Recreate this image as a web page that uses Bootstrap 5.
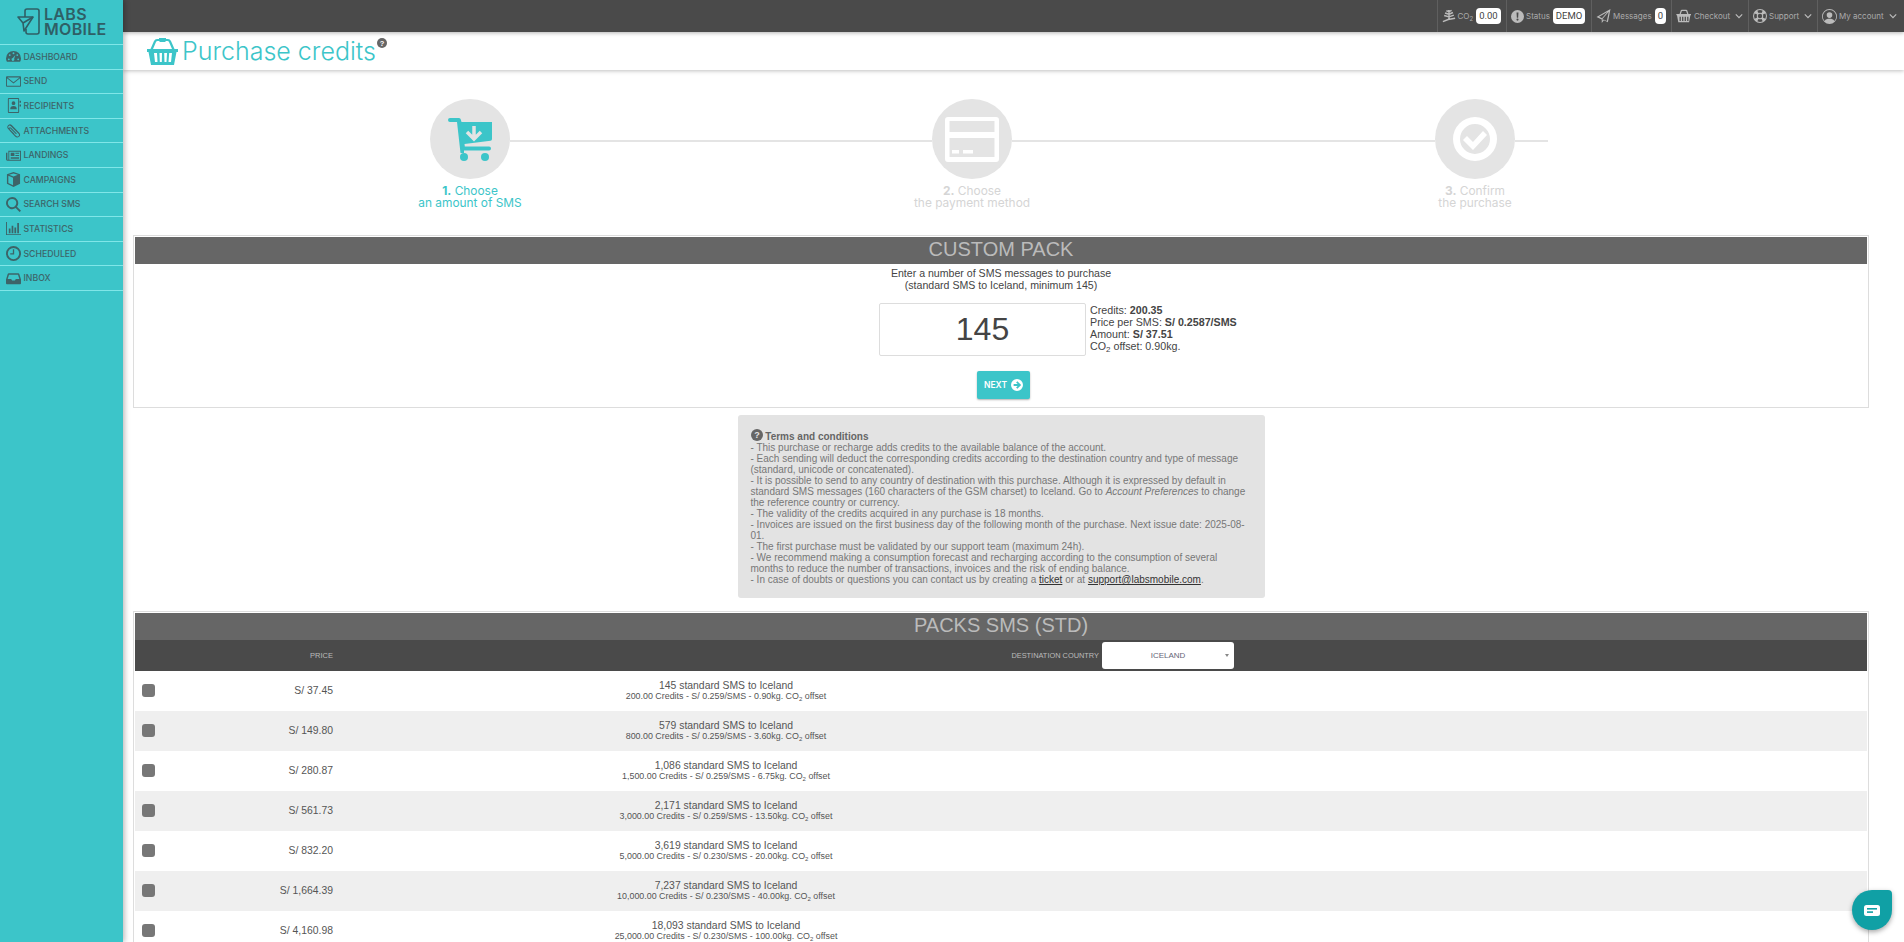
<!DOCTYPE html>
<html lang="en">
<head>
    <meta charset="UTF-8">
    <meta name="viewport" content="width=device-width, initial-scale=1.0">
    <title>Purchase credits</title>
    <link href="https://cdn.jsdelivr.net/npm/bootstrap@5.3.0/dist/css/bootstrap.min.css" rel="stylesheet">
    <style>
        html, body { height: 100%; overflow: hidden; }
        body { font-family: "Liberation Sans", Arial, sans-serif; color: #444; background: #fff; }
        .side-bar { width: 123px; background: #3cc5c9; box-shadow: 2px 0 5px rgba(0,0,0,.25); z-index: 3; }
        .logo-box { height: 44px; padding-left: 17px; gap: 3px; color: #2f5f66; }
        .logo-words { font: 600 16px/15px Inter, sans-serif; letter-spacing: .3px; }
        .side-link { height: 24.6px; border-top: 1px solid #80e6e8; font: 500 8.7px Inter, sans-serif; color: #3d6468; text-transform: uppercase; text-decoration: none; }
        .side-link:last-child { border-bottom: 1px solid #80e6e8; height: 25.6px; }
        .side-ico { width: 23.5px; flex: none; display: flex; justify-content: center; padding-left: 4px; }
        .side-ico svg { width: 15px; height: 15px; fill: #3d6468; }
        .top-strip { height: 32px; background: #4a4a4a; color: #aaa; font: 400 8px Inter, sans-serif; box-shadow: 0 1px 4px rgba(0,0,0,.3); z-index: 2; }
        .top-item { height: 32px; border-left: 1px solid #5f5f5f; padding-left: 4px; gap: 2px; }
        .top-item:nth-child(1) { width: 69.5px; }
        .top-item:nth-child(2) { width: 85px; }
        .top-item:nth-child(3) { width: 80px; }
        .top-item:nth-child(4) { width: 77px; }
        .top-item:nth-child(5) { width: 69px; }
        .top-item:nth-child(6) { width: 87px; }
        .top-item svg { fill: #bbb; flex: none; }
        .top-pill { background: #fff; color: #444; border-radius: 4px; height: 16px; padding: 0 3px; font: 9.5px/16px Roboto, sans-serif; margin-left: 1px; }
        .chev { width: 8px; height: 8px; margin-left: 3px; }
        .title-strip { height: 38px; padding-left: 24px; color: #3cc5c9; box-shadow: 0 1px 4px rgba(0,0,0,.25); font: 300 25px/38px Inter, sans-serif; z-index: 1; }
        .title-help { width: 10px; height: 10px; margin: -16px 0 0 1px; }
        .page-body { padding: 0 35px 0 10px; }
        .step-row { padding: 29px 0 0 297px; height: 165px; }
        .step-item { width: 80px; font: 400 11.9px/12px Inter, sans-serif; white-space: nowrap; color: #d5d5d5; }
        .step-item.on { color: #3cc5c9; }
        .step-dot { width: 80px; height: 80px; background: #e4e4e4; margin-bottom: 6px; }
        .step-line { height: 2px; background: #e4e4e4; margin-top: 41px; }
        .pack-panel { border: 1px solid #ddd; padding: 1px; }
        .pack-title { height: 27px; background: #666; color: #bbb; font-size: 20px; line-height: 25px; }
        .pack-intro { font-size: 10.6px; line-height: 12px; padding-top: 3px; color: #444; }
        .qty-row { padding-left: 744px; margin-top: 12px; }
        .qty-input { width: 207px; height: 53px; font-size: 32px; text-align: center; color: #444; border: 1px solid #ddd; border-radius: 2px; padding: 0; }
        .qty-info { font-size: 10.7px; line-height: 12px; color: #444; margin-top: -3px; }
        .qty-info sub { font-size: 8px; line-height: 0; }
        .next-btn { width: 53px; height: 28px; padding: 0; margin: 15px auto 7px; background: #3cc5c9; color: #fff; border: 0; border-radius: 2px; box-shadow: 0 1px 2px rgba(0,0,0,.3); font: 600 8.5px Inter, sans-serif; }
        .next-wrap { padding-left: 5px; }
        .terms-box { width: 527px; height: 183px; background: #e3e3e3; border-radius: 3px; padding: 14px 13px 0; margin: 7px auto 13px; font-size: 10px; line-height: 11px; color: #777; }
        .terms-box a { color: #333; }
        .pack-head { height: 31px; background: #4a4a4a; color: #bbb; font-size: 7.5px; }
        .col-price { width: 198px; text-align: right; flex: none; }
        .dest-label { width: 766px; text-align: right; flex: none; font-size: 7.4px; }
        .dest-select { width: 132px; height: 27px; margin-left: 3px; background: #fff; border-radius: 3px; color: #667; font-size: 8px; }
        .dest-select::after { content: ""; position: absolute; right: 5px; top: 12px; border: 2.5px solid transparent; border-top: 3.5px solid #888; }
        .pack-line { height: 40px; font-size: 10.4px; color: #555; }
        .pack-line:nth-child(even) { background: #efefef; }
        .pack-check { width: 13px; height: 13px; background: #777; border-radius: 3px; margin: -2px 0 0 7px; flex: none; }
        .pack-price { width: 178px; text-align: right; flex: none; }
        .pack-desc { width: 786px; text-align: center; flex: none; line-height: 10px; }
        .pack-desc small { display: block; font-size: 8.9px; line-height: 10px; }
        .pack-desc sub { font-size: 6px; }
        .chat-btn { position: fixed; right: 12px; bottom: 12px; width: 40px; height: 40px; background: #10a0a5; border-radius: 50% 4px 50% 50%; box-shadow: 0 2px 5px rgba(0,0,0,.35); z-index: 5; }
    </style>
</head>
<body>
<div class="d-flex h-100">
    <!-- Sidebar -->
    <aside class="side-bar flex-shrink-0">
        <div class="logo-box d-flex align-items-center">
            <svg width="24" height="28" viewBox="0 0 24 28" fill="none" stroke="#2f5f66" stroke-width="1.6" stroke-linejoin="round"><path d="M8 9V3q0-2 2-2h10q2 0 2 2v21q0 2-2 2H11q-2 0-2-2v-3"/><path d="M1 9h15l-9 14-1-8z"/><path d="M16 9 6 15"/></svg>
            <div class="logo-words">LABS<br>MOBILE</div>
        </div>
        <nav class="d-flex flex-column" id="side-nav"></nav>
    </aside>

    <div class="flex-grow-1 d-flex flex-column overflow-hidden">
        <!-- Top bar -->
        <header class="top-strip d-flex justify-content-end align-items-center flex-shrink-0">
            <div class="top-item d-flex align-items-center">
                <svg width="14" height="14" viewBox="0 0 16 16"><path d="M8 1v11M8 3 5 2M8 3l3-1.500M8 6 3.500 4.500M8 6l4.500-2M8 9 2.500 7.500M8 9l5.500-2M1 14.500l6-2.500 8-1.500" fill="none" stroke="#bbb" stroke-width="1.700"/></svg>
                <span>CO<sub>2</sub></span><span class="top-pill">0.00</span>
            </div>
            <div class="top-item d-flex align-items-center">
                <svg width="13" height="13" viewBox="0 0 16 16"><path fill-rule="evenodd" d="M8 0a8 8 0 1 1 0 16A8 8 0 0 1 8 0zM6.800 3l.4 6.500h1.600L9.200 3zM8 10.500a1.300 1.300 0 1 0 0 2.600 1.300 1.300 0 0 0 0-2.600z"/></svg>
                <span>Status</span><span class="top-pill">DEMO</span>
            </div>
            <div class="top-item d-flex align-items-center">
                <svg width="15" height="14" viewBox="0 0 16 16"><path fill-rule="evenodd" d="M16 0 13 15 8.500 12.800 6 16V12L0 9zM3 8.800l3.300 1.700L12.500 3.500zM7 11.200v2l1-1.300 3.800 1.700L14 3z"/></svg>
                <span>Messages</span><span class="top-pill">0</span>
            </div>
            <div class="top-item d-flex align-items-center">
                <svg width="16" height="14" viewBox="0 0 24 22"><path fill-rule="evenodd" d="M5 8 7 2q.4-1 1.500-1h7q1.100 0 1.500 1l2 6h4v2h-1l-2 11H3L1 10H0V8zM7 8h10L15.300 3H8.700zM5 12v7h2v-7zm4 0v7h2v-7zm4 0v7h2v-7zm4 0v7h2v-7z"/></svg>
                <span>Checkout</span>
                <svg class="chev" viewBox="0 0 10 10"><path d="M1 3 5 7 9 3" fill="none" stroke="#bbb" stroke-width="1.500"/></svg>
            </div>
            <div class="top-item d-flex align-items-center">
                <svg width="14" height="14" viewBox="0 0 16 16"><path fill-rule="evenodd" d="M8 0a8 8 0 1 1 0 16A8 8 0 0 1 8 0zM5 1.900 6.200 4.700a3.700 3.700 0 0 1 3.600 0L11 1.900a6.800 6.800 0 0 0-6 0zM14.100 5l-2.800 1.200a3.700 3.700 0 0 1 0 3.600l2.800 1.200a6.800 6.800 0 0 0 0-6zM11 14.100 9.800 11.300a3.700 3.700 0 0 1-3.600 0L5 14.100a6.800 6.800 0 0 0 6 0zM1.900 11l2.800-1.200a3.700 3.700 0 0 1 0-3.600L1.900 5a6.800 6.800 0 0 0 0 6zM8 5.500a2.500 2.500 0 1 0 0 5 2.500 2.500 0 0 0 0-5z"/></svg>
                <span>Support</span>
                <svg class="chev" viewBox="0 0 10 10"><path d="M1 3 5 7 9 3" fill="none" stroke="#bbb" stroke-width="1.500"/></svg>
            </div>
            <div class="top-item d-flex align-items-center">
                <svg width="15" height="15" viewBox="0 0 16 16"><path fill-rule="evenodd" d="M8 0a8 8 0 1 1 0 16A8 8 0 0 1 8 0zm0 1a7 7 0 0 0-5.200 11.700C4 11 5.500 10.500 8 10.500s4 .5 5.200 2.200A7 7 0 0 0 8 1zm0 2.500a3 3 0 1 1 0 6 3 3 0 0 1 0-6z"/></svg>
                <span>My account</span>
                <svg class="chev" viewBox="0 0 10 10"><path d="M1 3 5 7 9 3" fill="none" stroke="#bbb" stroke-width="1.500"/></svg>
            </div>
        </header>

        <!-- Page title -->
        <div class="title-strip d-flex align-items-center flex-shrink-0">
            <svg class="me-1" width="31" height="27" viewBox="0 0 31 27" fill="#3cc5c9"><path fill-rule="evenodd" d="M0 11h3.500L7 3q1-2 3-2h2V0h7v1h2q2 0 3 2l3.500 8H31v3h-1.500L27 27H4L1.500 14H0zM6 11h19L22 4q-.5-1-1.500-1h-2v1h-6V3h-2Q9.500 3 9 4zM7 15l1 9h2.500l-.5-9zm5.500 0 .3 9h2l.2-9zm4.700 0 .3 9h2l.5-9zm5 0-.7 9H24l1-9z"/></svg>
            <span>Purchase credits</span>
            <svg class="title-help" viewBox="0 0 16 16"><circle cx="8" cy="8" r="8" fill="#666"/><text x="8" y="12.500" font-size="12" font-weight="700" text-anchor="middle" fill="#fff" font-family="Liberation Sans">?</text></svg>
        </div>

        <main class="page-body flex-grow-1 overflow-hidden">
            <!-- Steps -->
            <div class="step-row d-flex align-items-start">
                <div class="step-item on d-flex flex-column align-items-center text-center">
                    <div class="step-dot rounded-circle d-flex align-items-center justify-content-center">
                        <svg width="46" height="46" viewBox="0 0 46 46"><path fill="#3cc5c9" d="M3 2h9q1.500 0 1.800 1.500L14.500 6H45v17q0 1.500-1.500 1.700L17.500 28l.3 2.500H42q2 0 2 2t-2 2H17v2.500h-3.500L10 6H3Q1 6 1 4t2-2z"/><circle cx="17" cy="41" r="4" fill="#3cc5c9"/><circle cx="38" cy="41" r="4" fill="#3cc5c9"/><path d="M27 10v12M20 16l7 7 7-7" fill="none" stroke="#e4e4e4" stroke-width="3.500"/></svg>
                    </div>
                    <div><b>1.</b> Choose<br>an amount of SMS</div>
                </div>
                <div class="step-line" style="width:422px"></div>
                <div class="step-item d-flex flex-column align-items-center text-center">
                    <div class="step-dot rounded-circle d-flex align-items-center justify-content-center">
                        <svg width="54" height="46" viewBox="0 0 54 46"><path fill="#fff" fill-rule="evenodd" d="M3 1h48q3 0 3 3v39q0 3-3 3H3q-3 0-3-3V4q0-3 3-3zm1.500 4v11h45V5zm0 17v19h45V22zM7 34h7v3.500H7zm11 0h10v3.500H18z"/></svg>
                    </div>
                    <div><b>2.</b> Choose<br>the payment method</div>
                </div>
                <div class="step-line" style="width:423px"></div>
                <div class="step-item d-flex flex-column align-items-center text-center">
                    <div class="step-dot rounded-circle d-flex align-items-center justify-content-center">
                        <svg width="44" height="44" viewBox="0 0 44 44"><path fill="#fff" fill-rule="evenodd" d="M22 0a22 22 0 1 1 0 44 22 22 0 0 1 0-44zm0 7a15 15 0 1 0 0 30 15 15 0 0 0 0-30z"/><path fill="#fff" d="m10 23 4-4 6 6 10-11 4 4-14 15z"/></svg>
                    </div>
                    <div><b>3.</b> Confirm<br>the purchase</div>
                </div>
                <div class="step-line" style="width:33px"></div>
            </div>

            <!-- Custom pack -->
            <section class="pack-panel text-center">
                <div class="pack-title">CUSTOM PACK</div>
                <div class="pack-intro">Enter a number of SMS messages to purchase<br>(standard SMS to Iceland, minimum 145)</div>
                <div class="qty-row d-flex align-items-center">
                    <input class="form-control qty-input" value="145">
                    <div class="qty-info text-start ms-1">
                        Credits: <b>200.35</b><br>
                        Price per SMS: <b>S/ 0.2587/SMS</b><br>
                        Amount: <b>S/ 37.51</b><br>
                        CO<sub>2</sub> offset: 0.90kg.
                    </div>
                </div>
                <div class="next-wrap">
                    <button class="btn next-btn d-flex align-items-center justify-content-center gap-1">NEXT
                        <svg width="12" height="12" viewBox="0 0 16 16"><path fill="#fff" fill-rule="evenodd" d="M8 0a8 8 0 1 1 0 16A8 8 0 0 1 8 0zm.500 3L6.800 4.700 8.900 6.800H3.500v2.400h5.400L6.800 11.300 8.500 13l5-5z"/></svg>
                    </button>
                </div>
            </section>

            <!-- Terms -->
            <div class="terms-box">
                <svg width="12" height="12" viewBox="0 0 16 16" style="vertical-align:-1px"><circle cx="8" cy="8" r="8" fill="#666"/><text x="8" y="12.500" font-size="12" font-weight="700" text-anchor="middle" fill="#e3e3e3" font-family="Liberation Sans">?</text></svg>
                <b style="color:#666">Terms and conditions</b><br>
                - This purchase or recharge adds credits to the available balance of the account.<br>
                - Each sending will deduct the corresponding credits according to the destination country and type of message (standard, unicode or concatenated).<br>
                - It is possible to send to any country of destination with this purchase. Although it is expressed by default in standard SMS messages (160 characters of the GSM charset) to Iceland. Go to <i>Account Preferences</i> to change the reference country or currency.<br>
                - The validity of the credits acquired in any purchase is 18 months.<br>
                - Invoices are issued on the first business day of the following month of the purchase. Next issue date: 2025-08-01.<br>
                - The first purchase must be validated by our support team (maximum 24h).<br>
                - We recommend making a consumption forecast and recharging according to the consumption of several months to reduce the number of transactions, invoices and the risk of ending balance.<br>
                - In case of doubts or questions you can contact us by creating a <a href="#">ticket</a> or at <a href="#">support@labsmobile.com</a>.
            </div>

            <!-- Packs -->
            <section class="pack-panel">
                <div class="pack-title text-center">PACKS SMS (STD)</div>
                <div class="pack-head d-flex align-items-center text-uppercase">
                    <div class="col-price">Price</div>
                    <div class="dest-label">Destination country</div>
                    <div class="dest-select position-relative d-flex align-items-center justify-content-center">ICELAND</div>
                </div>
                <div id="pack-list"></div>
            </section>
        </main>
    </div>
</div>

<div class="chat-btn d-flex align-items-center justify-content-center">
    <svg width="16" height="11" viewBox="0 0 16 11"><rect width="16" height="11" rx="2.500" fill="#fff"/><rect x="3" y="3" width="10" height="1.600" fill="#10a0a5"/><rect x="3" y="6.300" width="6" height="1.600" fill="#10a0a5"/></svg>
</div>

<script>
    const icons = {
        gauge: '<path fill-rule="evenodd" d="M8 2a8 8 0 0 1 8 8q0 2-1 3.500H1Q0 12 0 10a8 8 0 0 1 8-8zM8 3.500a1 1 0 1 0 0 2 1 1 0 0 0 0-2zm-4 2a1 1 0 1 0 0 2 1 1 0 0 0 0-2zm8 0a1 1 0 1 0 0 2 1 1 0 0 0 0-2zM3 10a1 1 0 1 0 0 2 1 1 0 0 0 0-2zm10 0a1 1 0 1 0 0 2 1 1 0 0 0 0-2zM10 6.500 7.300 9.600a1.500 1.500 0 1 0 1.400.7z"/>',
        mail: '<path fill-rule="evenodd" d="M1 2.500h14q1 0 1 1v9q0 1-1 1H1q-1 0-1-1v-9q0-1 1-1zm.500 1.200 6.500 5 6.500-5zM1 4.500v8h14v-8L8 10z"/>',
        book: '<path fill-rule="evenodd" d="M3 0h10q1 0 1 1v14q0 1-1 1H3q-1 0-1-1V1q0-1 1-1zm0 1v14h10V1zm5 2.500a2 2 0 1 1 0 4 2 2 0 0 1 0-4zM4.500 12q0-3.500 3.500-3.500T11.500 12zM14.500 3H16v2h-1.500zm0 4H16v2h-1.500z"/>',
        clip: '<path d="M2.500 2.200q1.800-1.800 3.600 0l8 8.200q2 2.600-.2 4.300-2.200 1.700-4.200-.4L3.200 7.500q-1.200-1.400 0-2.500 1.200-1.100 2.500.2l5.800 6-.8.8-5.800-6q-.5-.5-.9-.1t.1 1l6.500 6.800q1.300 1.300 2.700.3 1.200-1.100 0-2.500L4.900 3.300q-1-1-2-.1-1 1-.1 2L9 11.500l-.8.8L2 6q-1.500-2 .5-3.800z"/>',
        news: '<path fill-rule="evenodd" d="M2.500 3H16v10.500H1.500Q0 13.500 0 12V5h1.500v7.200q0 .3.500.3t.5-.3zm1 1v8.500H15V4zM5 5h4v3.500H5zm5 0h4v1h-4zm0 2.500h4v1h-4zM5 9.500h9v1H5zm0 1.500h9v.8H5z"/>',
        cube: '<path fill-rule="evenodd" d="M8 0l7 2.500v10L8 16l-7-3.500v-10zM2.500 4v7.600L7.500 14.200V6zM8 1.500 3.300 3 8 4.800 12.700 3z"/>',
        search: '<path fill-rule="evenodd" d="M6.500 0a6.500 6.500 0 0 1 5.200 10.400L16 14.600 14.500 16 10.300 11.800A6.500 6.500 0 1 1 6.500 0zm0 2a4.500 4.500 0 1 0 0 9 4.500 4.500 0 0 0 0-9z"/>',
        chart: '<path d="M0 1h1v13h15v1H0zM3 8h1.800v5H3zm3-3h1.800v8H6zm3 2h1.800v6H9zm3-5h1.800v11H12z"/>',
        clock: '<path fill-rule="evenodd" d="M8 0a8 8 0 1 1 0 16A8 8 0 0 1 8 0zm0 2a6 6 0 1 0 0 12A6 6 0 0 0 8 2zm-.700 1.500h1.400V9H4.500V7.700h2.800z"/>',
        inbox: '<path fill-rule="evenodd" d="M3 2.500h10q1 0 1.300 1L16 9v4q0 1-1 1H1q-1 0-1-1V9l1.700-5.500q.3-1 1.300-1zM3.200 4 1.800 8.500h3.700l1 1.500h3l1-1.500h3.700L12.800 4z"/>'
    };

    const menu = [
        ['gauge', 'Dashboard'], ['mail', 'Send'], ['book', 'Recipients'], ['clip', 'Attachments'],
        ['news', 'Landings'], ['cube', 'Campaigns'], ['search', 'Search SMS'], ['chart', 'Statistics'],
        ['clock', 'Scheduled'], ['inbox', 'Inbox']
    ];

    document.getElementById('side-nav').innerHTML = menu.map(m =>
        `<a href="#" class="side-link d-flex align-items-center"><span class="side-ico"><svg viewBox="0 0 16 16">${icons[m[0]]}</svg></span>${m[1]}</a>`
    ).join('');

    const packs = [
        ['37.45', '145', '200.00', '0.259', '0.90'],
        ['149.80', '579', '800.00', '0.259', '3.60'],
        ['280.87', '1,086', '1,500.00', '0.259', '6.75'],
        ['561.73', '2,171', '3,000.00', '0.259', '13.50'],
        ['832.20', '3,619', '5,000.00', '0.230', '20.00'],
        ['1,664.39', '7,237', '10,000.00', '0.230', '40.00'],
        ['4,160.98', '18,093', '25,000.00', '0.230', '100.00']
    ];

    document.getElementById('pack-list').innerHTML = packs.map(p => `
        <div class="pack-line d-flex align-items-center">
            <span class="pack-check"></span>
            <span class="pack-price">S/ ${p[0]}</span>
            <span class="pack-desc">${p[1]} standard SMS to Iceland<small>${p[2]} Credits - S/ ${p[3]}/SMS - ${p[4]}kg. CO<sub>2</sub> offset</small></span>
        </div>`).join('');
</script>
<script src="https://cdn.jsdelivr.net/npm/bootstrap@5.3.0/dist/js/bootstrap.bundle.min.js"></script>
</body>
</html>
